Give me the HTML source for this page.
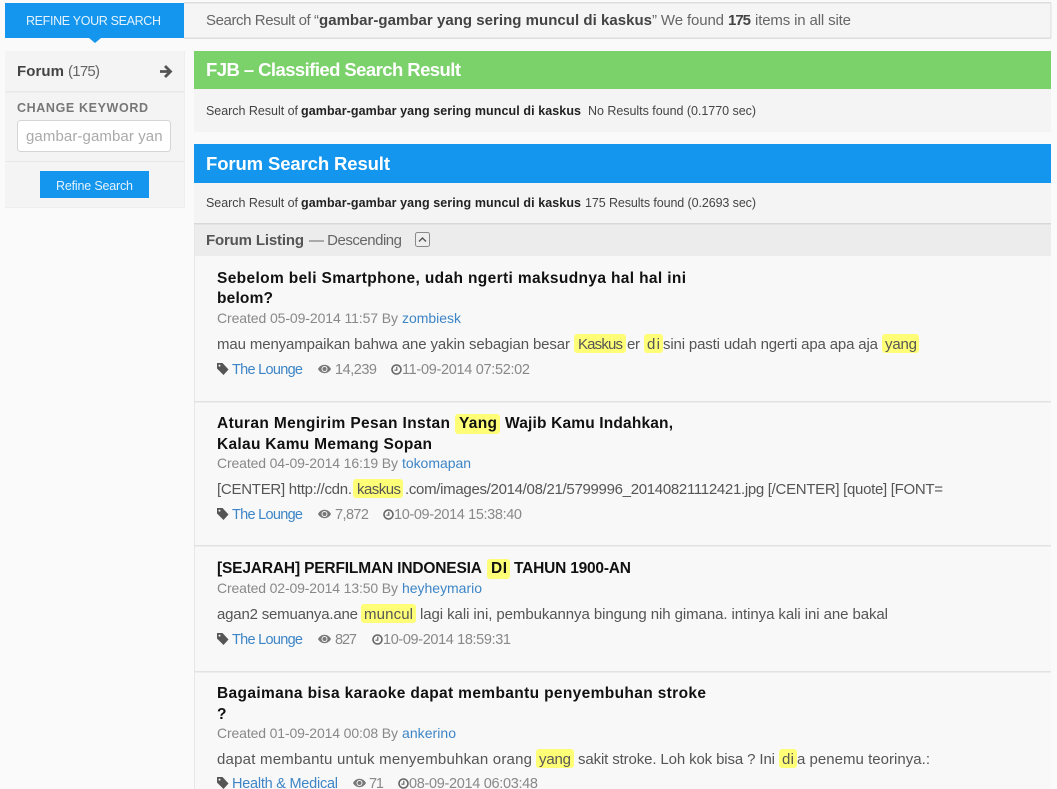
<!DOCTYPE html>
<html><head><meta charset="utf-8"><title>Search</title>
<style>
html,body{margin:0;padding:0;background:#fafafa;width:1057px;height:789px;overflow:hidden}
svg{position:absolute;left:0;top:0}
text{font-family:"Liberation Sans",sans-serif;font-size:15px;fill:#666}
.b{font-weight:bold;fill:#444}
.s{font-size:12.5px;fill:#444}
.sb{font-size:12.5px;font-weight:bold;fill:#222}
.t{font-size:15.5px;font-weight:bold;fill:#111}
.c{font-size:14px;fill:#888}
.l{font-size:14px;fill:#3d85c6}
.d{font-size:15px;fill:#555}
.m{font-size:14.5px;fill:#888}
.ml{font-size:14.5px;fill:#3d85c6}
.h{font-size:18.5px;font-weight:bold;fill:#fff}
</style></head><body>
<svg width="1057" height="789" viewBox="0 0 1057 789" xmlns="http://www.w3.org/2000/svg">
<rect width="1057" height="789" fill="#fafafa"/>
<!-- top bar -->
<rect x="184" y="3" width="867" height="35" fill="#f5f5f5"/>
<rect x="184" y="2" width="867" height="1.5" fill="#ddd"/>
<rect x="184" y="37.5" width="867" height="1.5" fill="#ddd"/>
<rect x="1050.5" y="3" width="1" height="35" fill="#ddd"/>
<rect x="5" y="3" width="179" height="35" fill="#1496ee"/>
<path d="M89 38h12l-6 5z" fill="#1496ee"/>
<text x="26" y="25" style="font-size:12.5px;fill:#e3f2fd" textLength="135">REFINE YOUR SEARCH</text>
<text x="206" y="25" textLength="113">Search Result of “</text>
<text x="319" y="25" class="b" textLength="333">gambar-gambar yang sering muncul di kaskus</text>
<text x="652" y="25" textLength="72">” We found</text>
<text x="728" y="25" class="b" textLength="23">175</text>
<text x="755" y="25" textLength="96">items in all site</text>
<!-- sidebar -->
<rect x="5" y="51" width="179" height="156" fill="#f4f4f4"/>
<rect x="5" y="91" width="179" height="1.5" fill="#e8e8e8"/>
<rect x="5" y="161" width="179" height="1" fill="#e8e8e8"/>
<rect x="184" y="51" width="1" height="156" fill="#eee"/>
<rect x="5" y="207" width="180" height="1" fill="#eee"/>
<text x="17" y="76" class="b" textLength="47">Forum</text>
<text x="68" y="76" textLength="32">(175)</text>
<path d="M160 71.5h9.5M165 66l5.5 5.5-5.5 5.5" fill="none" stroke="#555" stroke-width="2.8"/>
<text x="17" y="112" style="font-size:12.5px;font-weight:bold;fill:#777" textLength="131">CHANGE KEYWORD</text>
<rect x="17.5" y="120.5" width="153" height="31" rx="3" fill="#fff" stroke="#d5d5d5"/>
<clipPath id="ic"><rect x="26" y="122" width="136" height="28"/></clipPath>
<g clip-path="url(#ic)"><text x="26" y="141" style="fill:#aaa" textLength="145">gambar-gambar yang</text></g>
<rect x="40" y="171" width="109" height="27" fill="#1496ee"/>
<text x="56" y="190" style="font-size:12.5px;fill:#e3f2fd" textLength="77">Refine Search</text>
<!-- FJB -->
<rect x="194" y="89" width="857" height="43" fill="#f4f4f4"/>
<rect x="194" y="51" width="857" height="38" fill="#7bd16a"/>
<text x="206" y="76" class="h" textLength="255">FJB – Classified Search Result</text>
<text x="206" y="115" class="s" textLength="92">Search Result of</text>
<text x="301" y="115" class="sb" textLength="280">gambar-gambar yang sering muncul di kaskus</text>
<text x="588" y="115" class="s" textLength="168">No Results found (0.1770 sec)</text>
<!-- Forum -->
<rect x="194" y="183" width="857" height="41" fill="#f4f4f4"/>
<rect x="194" y="144" width="857" height="39" fill="#1496ee"/>
<text x="206" y="170" class="h" textLength="184">Forum Search Result</text>
<text x="206" y="207" class="s" textLength="92">Search Result of</text>
<text x="301" y="207" class="sb" textLength="280">gambar-gambar yang sering muncul di kaskus</text>
<text x="585" y="207" class="s" textLength="171">175 Results found (0.2693 sec)</text>
<!-- listing -->
<rect x="194" y="256" width="857" height="533" fill="#f8f8f8"/>
<rect x="194" y="224" width="857" height="32" fill="#ececec"/>
<rect x="194" y="223" width="857" height="1.5" fill="#d8d8d8"/>
<rect x="194" y="224" width="1" height="565" fill="#e6e6e6"/>
<text x="206" y="245" class="b" style="fill:#555" textLength="98">Forum Listing</text>
<text x="309" y="245" textLength="93">— Descending</text>
<rect x="415.5" y="232.5" width="14" height="14" rx="2" fill="#eee" stroke="#888"/>
<path d="M419 241.5l3.5-3.5 3.5 3.5" fill="none" stroke="#555" stroke-width="1.4"/>
<rect x="194" y="401" width="857" height="1.5" fill="#e2e2e2"/>
<rect x="194" y="545" width="857" height="1.5" fill="#e2e2e2"/>
<rect x="194" y="671" width="857" height="1.5" fill="#e2e2e2"/>

<defs>
<g id="tag"><path fill-rule="evenodd" d="M0 0h5.5l6 6.5-5 5.5L0 5.5zM2.5 1.6a1 1 0 1 0 .01 0z" fill="#555"/></g>
<g id="eye"><path d="M0 5c3-5.6 10-5.6 13 0-3 5.6-10 5.6-13 0z" fill="#777"/><circle cx="6.5" cy="5" r="3" fill="#f8f8f8"/><circle cx="6.5" cy="5" r="2" fill="#777"/></g>
<g id="clk"><circle cx="5.5" cy="5.5" r="4.5" fill="none" stroke="#666" stroke-width="1.6"/><path d="M5.8 2.8v3.4H3.4" fill="none" stroke="#666" stroke-width="1.2"/></g>
</defs>

<!-- item 1 -->
<text x="217" y="283" class="t" textLength="469">Sebelom beli Smartphone, udah ngerti maksudnya hal hal ini</text>
<text x="217" y="303" class="t" textLength="56">belom?</text>
<text x="217" y="323" class="c" textLength="181">Created 05-09-2014 11:57 By</text>
<text x="402" y="323" class="l" textLength="59">zombiesk</text>
<rect x="574" y="334" width="52" height="19" rx="3" fill="#ffff77"/>
<rect x="644" y="334" width="19" height="19" rx="3" fill="#ffff77"/>
<rect x="882" y="334" width="37" height="19" rx="3" fill="#ffff77"/>
<text x="217" y="349" class="d" textLength="353">mau menyampaikan bahwa ane yakin sebagian besar</text>
<text x="578" y="349" class="d" textLength="45">Kaskus</text>
<text x="627" y="349" class="d" textLength="13">er</text>
<text x="647" y="349" class="d" textLength="13">di</text>
<text x="663" y="349" class="d" textLength="215">sini pasti udah ngerti apa apa aja</text>
<text x="885" y="349" class="d" textLength="32">yang</text>
<use href="#tag" x="217" y="363"/>
<text x="232" y="374" class="ml" textLength="71">The Lounge</text>
<use href="#eye" x="318" y="364"/>
<text x="335" y="374" class="m" textLength="42">14,239</text>
<use href="#clk" x="391" y="364"/>
<text x="402" y="374" class="m" textLength="128">11-09-2014 07:52:02</text>

<!-- item 2 -->
<rect x="455" y="414" width="45" height="20" rx="3" fill="#ffff77"/>
<text x="217" y="428" class="t" textLength="233">Aturan Mengirim Pesan Instan</text>
<text x="459" y="428" class="t" textLength="38">Yang</text>
<text x="505" y="428" class="t" textLength="168">Wajib Kamu Indahkan,</text>
<text x="217" y="449" class="t" textLength="215">Kalau Kamu Memang Sopan</text>
<text x="217" y="468" class="c" textLength="181">Created 04-09-2014 16:19 By</text>
<text x="402" y="468" class="l" textLength="69">tokomapan</text>
<rect x="353" y="479" width="50" height="19" rx="3" fill="#ffff77"/>
<text x="217" y="494" class="d" textLength="135">[CENTER] http://cdn.</text>
<text x="357" y="494" class="d" textLength="44">kaskus</text>
<text x="405" y="494" class="d" textLength="538">.com/images/2014/08/21/5799996_20140821112421.jpg [/CENTER] [quote] [FONT=</text>
<use href="#tag" x="217" y="508"/>
<text x="232" y="519" class="ml" textLength="71">The Lounge</text>
<use href="#eye" x="318" y="509"/>
<text x="335" y="519" class="m" textLength="34">7,872</text>
<use href="#clk" x="383" y="509"/>
<text x="394" y="519" class="m" textLength="128">10-09-2014 15:38:40</text>

<!-- item 3 -->
<rect x="487" y="559" width="23" height="20" rx="3" fill="#ffff77"/>
<text x="217" y="573" class="t" textLength="265">[SEJARAH] PERFILMAN INDONESIA</text>
<text x="491" y="573" class="t" textLength="16">DI</text>
<text x="514" y="573" class="t" textLength="117">TAHUN 1900-AN</text>
<text x="217" y="593" class="c" textLength="181">Created 02-09-2014 13:50 By</text>
<text x="402" y="593" class="l" textLength="80">heyheymario</text>
<rect x="361" y="604" width="55" height="19" rx="3" fill="#ffff77"/>
<text x="217" y="619" class="d" textLength="141">agan2 semuanya.ane</text>
<text x="364" y="619" class="d" textLength="49">muncul</text>
<text x="420" y="619" class="d" textLength="468">lagi kali ini, pembukannya bingung nih gimana. intinya kali ini ane bakal</text>
<use href="#tag" x="217" y="633"/>
<text x="232" y="644" class="ml" textLength="71">The Lounge</text>
<use href="#eye" x="318" y="634"/>
<text x="335" y="644" class="m" textLength="22">827</text>
<use href="#clk" x="372" y="634"/>
<text x="383" y="644" class="m" textLength="128">10-09-2014 18:59:31</text>

<!-- item 4 -->
<text x="217" y="698" class="t" textLength="489">Bagaimana bisa karaoke dapat membantu penyembuhan stroke</text>
<text x="217" y="719" class="t">?</text>
<text x="217" y="738" class="c" textLength="181">Created 01-09-2014 00:08 By</text>
<text x="402" y="738" class="l" textLength="54">ankerino</text>
<rect x="536" y="749" width="38" height="19" rx="3" fill="#ffff77"/>
<rect x="779" y="749" width="18" height="19" rx="3" fill="#ffff77"/>
<text x="217" y="764" class="d" textLength="315">dapat membantu untuk menyembuhkan orang</text>
<text x="539" y="764" class="d" textLength="32">yang</text>
<text x="578" y="764" class="d" textLength="197">sakit stroke. Loh kok bisa ? Ini</text>
<text x="782" y="764" class="d" textLength="12">di</text>
<text x="797" y="764" class="d" textLength="133">a penemu teorinya.:</text>
<use href="#tag" x="217" y="777"/>
<text x="232" y="788" class="ml" textLength="106">Health &amp; Medical</text>
<use href="#eye" x="353" y="778"/>
<text x="369" y="788" class="m" textLength="15">71</text>
<use href="#clk" x="398" y="778"/>
<text x="409" y="788" class="m" textLength="129">08-09-2014 06:03:48</text>
</svg>
</body></html>
